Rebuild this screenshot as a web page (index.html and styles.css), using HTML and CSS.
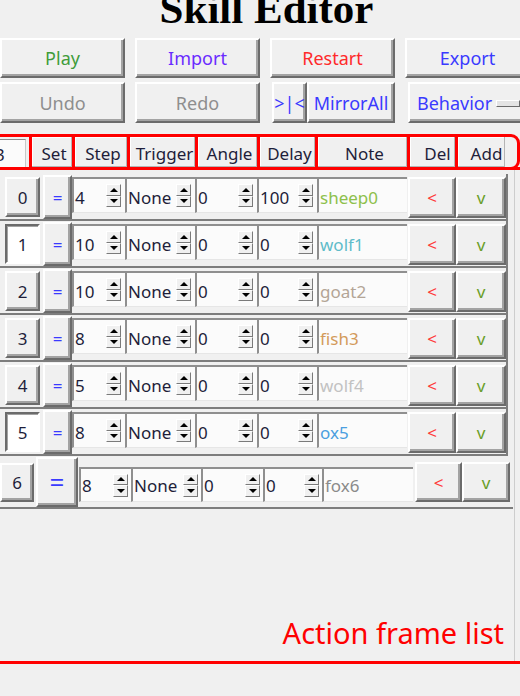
FILE: index.html
```html
<!DOCTYPE html>
<html lang="en">
<head>
    <meta charset="UTF-8">
    <meta name="viewport" content="width=device-width, initial-scale=1.0">
    <title>Skill Editor</title>
    <link rel="stylesheet" href="styles.css">
</head>
<body>
    <h1 class="title">Skill Editor</h1>

    <div class="toolbar">
        <button class="btn play">Play</button>
        <button class="btn import">Import</button>
        <button class="btn restart">Restart</button>
        <button class="btn export">Export</button>
        <button class="btn off">Undo</button>
        <button class="btn off">Redo</button>
        <div class="mirror">
            <button class="btn blue flip">&gt;|&lt;</button>
            <button class="btn blue all">MirrorAll</button>
        </div>
        <button class="btn blue behavior">Behavior<span class="indicator"></span></button>
    </div>

    <div class="header">
        <div class="cell count"><span class="entry">3</span></div>
        <div class="cell">Set</div>
        <div class="cell">Step</div>
        <div class="cell">Trigger</div>
        <div class="cell">Angle</div>
        <div class="cell">Delay</div>
        <div class="cell">Note</div>
        <div class="cell right">Del</div>
        <div class="cell right">Add</div>
    </div>

    <div class="frame">
        <div class="rows">
            <div class="row">
                <button class="idx">0</button>
                <button class="eq">=</button>
                <div class="spin"><span class="val">4</span><span class="arrows"><i></i><i></i></span></div>
                <div class="spin"><span class="val">None</span><span class="arrows"><i></i><i></i></span></div>
                <div class="spin"><span class="val">0</span><span class="arrows"><i></i><i></i></span></div>
                <div class="spin"><span class="val">100</span><span class="arrows"><i></i><i></i></span></div>
                <div class="note sheep">sheep0</div>
                <button class="del">&lt;</button>
                <button class="add">v</button>
            </div>
            <div class="row">
                <button class="idx sel">1</button>
                <button class="eq">=</button>
                <div class="spin"><span class="val">10</span><span class="arrows"><i></i><i></i></span></div>
                <div class="spin"><span class="val">None</span><span class="arrows"><i></i><i></i></span></div>
                <div class="spin"><span class="val">0</span><span class="arrows"><i></i><i></i></span></div>
                <div class="spin"><span class="val">0</span><span class="arrows"><i></i><i></i></span></div>
                <div class="note wolf">wolf1</div>
                <button class="del">&lt;</button>
                <button class="add">v</button>
            </div>
            <div class="row">
                <button class="idx">2</button>
                <button class="eq">=</button>
                <div class="spin"><span class="val">10</span><span class="arrows"><i></i><i></i></span></div>
                <div class="spin"><span class="val">None</span><span class="arrows"><i></i><i></i></span></div>
                <div class="spin"><span class="val">0</span><span class="arrows"><i></i><i></i></span></div>
                <div class="spin"><span class="val">0</span><span class="arrows"><i></i><i></i></span></div>
                <div class="note goat">goat2</div>
                <button class="del">&lt;</button>
                <button class="add">v</button>
            </div>
            <div class="row">
                <button class="idx">3</button>
                <button class="eq">=</button>
                <div class="spin"><span class="val">8</span><span class="arrows"><i></i><i></i></span></div>
                <div class="spin"><span class="val">None</span><span class="arrows"><i></i><i></i></span></div>
                <div class="spin"><span class="val">0</span><span class="arrows"><i></i><i></i></span></div>
                <div class="spin"><span class="val">0</span><span class="arrows"><i></i><i></i></span></div>
                <div class="note fish">fish3</div>
                <button class="del">&lt;</button>
                <button class="add">v</button>
            </div>
            <div class="row">
                <button class="idx">4</button>
                <button class="eq">=</button>
                <div class="spin"><span class="val">5</span><span class="arrows"><i></i><i></i></span></div>
                <div class="spin"><span class="val">None</span><span class="arrows"><i></i><i></i></span></div>
                <div class="spin"><span class="val">0</span><span class="arrows"><i></i><i></i></span></div>
                <div class="spin"><span class="val">0</span><span class="arrows"><i></i><i></i></span></div>
                <div class="note wolf-grey">wolf4</div>
                <button class="del">&lt;</button>
                <button class="add">v</button>
            </div>
            <div class="row">
                <button class="idx sel">5</button>
                <button class="eq">=</button>
                <div class="spin"><span class="val">8</span><span class="arrows"><i></i><i></i></span></div>
                <div class="spin"><span class="val">None</span><span class="arrows"><i></i><i></i></span></div>
                <div class="spin"><span class="val">0</span><span class="arrows"><i></i><i></i></span></div>
                <div class="spin"><span class="val">0</span><span class="arrows"><i></i><i></i></span></div>
                <div class="note ox">ox5</div>
                <button class="del">&lt;</button>
                <button class="add">v</button>
            </div>
            <div class="row last">
                <button class="idx">6</button>
                <button class="eq">=</button>
                <div class="spin"><span class="val">8</span><span class="arrows"><i></i><i></i></span></div>
                <div class="spin"><span class="val">None</span><span class="arrows"><i></i><i></i></span></div>
                <div class="spin"><span class="val">0</span><span class="arrows"><i></i><i></i></span></div>
                <div class="spin"><span class="val">0</span><span class="arrows"><i></i><i></i></span></div>
                <div class="note fox">fox6</div>
                <button class="del">&lt;</button>
                <button class="add">v</button>
            </div>

            <div class="caption">Action frame list</div>
        </div>
    </div>
</body>
</html>
```

FILE: styles.css
```css
html, body {
    margin: 0;
    width: 520px;
    height: 696px;
    overflow: hidden;
}
body {
    background-color: #f0f0f0;
    font-family: "Noto Sans", "Open Sans", sans-serif;
    color: #1e1e3a;
}
button {
    font: inherit;
    color: inherit;
    margin: 0;
    padding: 0;
}

/* title is partly scrolled off the top */
.title {
    margin: -13px 0 0;
    padding-left: 13px;
    height: 43px;
    font: 700 43px/43px "Liberation Serif", "Times New Roman", serif;
    text-align: center;
    color: #000;
}

/* raised tk-style button */
.btn, .idx, .eq, .del, .add {
    background: #f0f0f0;
    border: 2px solid;
    border-color: #fff #6b6b6b #6b6b6b #fff;
    box-shadow: inset -2px -2px 0 #a3a3a3;
    box-sizing: border-box;
}

.toolbar {
    display: grid;
    grid-template-columns: 125px 125px 125px 125px;
    grid-template-rows: 40px 41px;
    column-gap: 10px;
    row-gap: 4px;
    margin-top: 8px;
    font-size: 18px;
}
.toolbar .btn {
    height: 100%;
}
.play { color: #3f9c3a; }
.import { color: #6a2cff; }
.restart { color: #ff2a2a; }
.export { color: #3a3aff; }
.blue { color: #3a3aff; }
.off { color: #8e8e8e; }
.mirror {
    display: flex;
}
.flip {
    margin-left: 2px;
    width: 35px;
}
.all {
    flex: 1;
}
.behavior {
    margin-left: 3px;
    display: flex;
    align-items: center;
    padding-left: 7px;
}
.indicator {
    width: 24px;
    height: 7px;
    margin-left: 4px;
    margin-top: 1px;
    box-sizing: border-box;
    border: 1px solid;
    border-color: #fff #6b6b6b #6b6b6b #fff;
    background: #e4e4e4;
}

/* column headings */
.header {
    display: grid;
    grid-template-columns: 46px 43px 55px 68px 62px 58px 92px 48px 50px;
    height: 36px;
    box-sizing: border-box;
    margin: 11px 0 0 -20px;
    border: 3px solid #ff0000;
    border-radius: 0 9px 9px 0;
    font-size: 17px;
}
.cell {
    display: flex;
    align-items: center;
    justify-content: center;
    padding: 3px 0 0 4px;
    border-left: 3px solid #ff0000;
    box-sizing: border-box;
    box-shadow: inset -1px -1px 0 #b4b4b4, inset 1px 1px 0 #fff;
}
.cell.right {
    padding-left: 10px;
}
.cell.count {
    border-left: none;
    padding: 2px 3px 0 0;
    box-shadow: none;
    align-items: stretch;
    justify-content: stretch;
}
.entry {
    flex: 1;
    display: flex;
    align-items: center;
    padding: 2px 0 0 12px;
    background: #fbfbfb;
    border-top: 1px solid #8a8a8a;
    border-right: 1px solid #c8c8c8;
}

/* frame list */
.frame {
    height: 491px;
    margin-top: -3px;
    border-top: 3px solid #ff0000;
    border-bottom: 3px solid #ff0000;
}
.rows {
    display: flex;
    flex-direction: column;
    width: 515px;
    height: 100%;
    box-sizing: border-box;
    padding-top: 4px;
    border-right: 1px solid #cdcdcd;
    font-size: 17px;
}
.row {
    display: grid;
    grid-template-columns: 40px 32px 53px 70px 62px 60px 90px 49px 50px;
    align-items: start;
    width: 508px;
    height: 47px;
    box-sizing: border-box;
    border-bottom: 2px solid #7d7d7d;
    border-right: 2px solid #7d7d7d;
}
.idx {
    margin: 3px 0 0 5px;
    height: 40px;
}
.idx.sel {
    background: #fff;
    border-color: #6b6b6b #fff #fff #6b6b6b;
    box-shadow: inset 1px 1px 0 #a3a3a3;
}
.eq {
    margin: 1px 0 0 3px;
    height: 44px;
    color: #3a3aff;
}
.spin, .note {
    display: flex;
    align-items: center;
    margin-top: 3px;
    height: 36px;
    box-sizing: border-box;
    background: #fbfbfb;
    border-top: 2px solid #8f8f8f;
    border-left: 2px solid #8f8f8f;
    border-bottom: 1px solid #e6e6e6;
}
.val, .note {
    padding: 4px 0 0 1px;
}
.val {
    flex: 1;
}
.arrows {
    display: flex;
    flex-direction: column;
    width: 15px;
    height: 23px;
    margin-right: 4px;
}
.arrows i {
    flex: 1;
    display: flex;
    align-items: center;
    justify-content: center;
    background: #f0f0f0;
    border: 1px solid;
    border-color: #fff #7a7a7a #7a7a7a #fff;
}
.arrows i::after {
    content: '';
    border-left: 4px solid transparent;
    border-right: 4px solid transparent;
}
.arrows i:first-child::after {
    border-bottom: 4px solid #000;
}
.arrows i:last-child::after {
    border-top: 4px solid #000;
}
.del, .add {
    margin-top: 3px;
    height: 41px;
}
.del {
    margin-left: 1px;
    color: #ff3a3a;
}
.add {
    color: #6a9e2a;
}

.sheep { color: #8dc04c; }
.wolf { color: #5fbcc9; }
.goat { color: #b3a596; }
.fish { color: #d39a5a; }
.wolf-grey { color: #c2c2c2; }
.ox { color: #4b9fe0; }
.fox { color: #8a8a8a; }

/* last row is laid out a little wider */
.row.last {
    grid-template-columns: 34px 44px 53px 70px 62px 59px 91px 49px 48px;
    width: 513px;
    height: 53px;
    border-right: none;
}
.row.last .idx {
    margin: 7px 0 0;
    height: 39px;
}
.row.last .eq {
    margin: 1px 0 0 2px;
    height: 50px;
    font-size: 26px;
}
.row.last .spin, .row.last .note {
    margin-top: 11px;
    height: 35px;
}
.row.last .val, .row.last .note {
    padding-top: 0;
}
.row.last .spin:first-of-type {
    margin-left: 1px;
}
.row.last .arrows {
    margin-right: 3px;
}
.row.last .del, .row.last .add {
    margin-top: 6px;
    height: 40px;
}
.row.last .del {
    margin-left: 2px;
}

.caption {
    margin-top: auto;
    margin-bottom: 10px;
    padding-right: 10px;
    text-align: right;
    font-size: 29px;
    line-height: 36px;
    color: #ff0000;
}
```
